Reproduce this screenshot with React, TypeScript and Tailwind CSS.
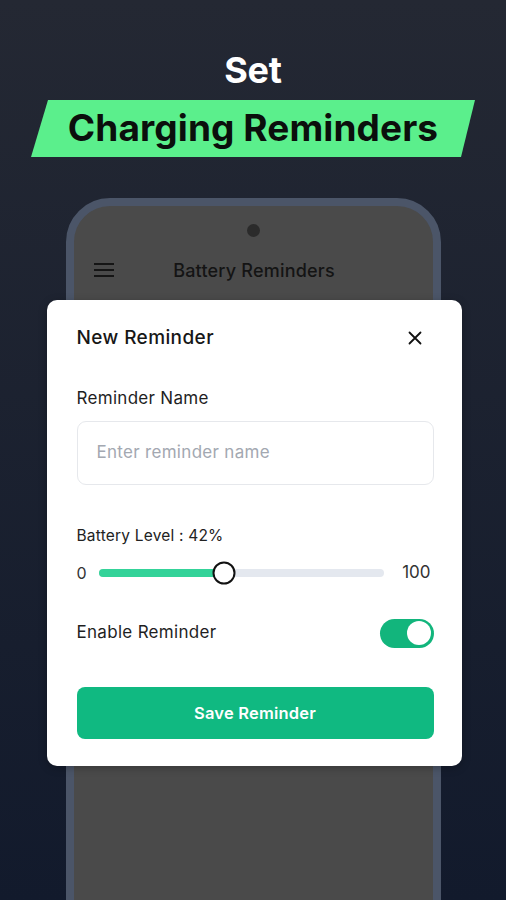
import React from 'react';

const App: React.FC = () => {
  return (
    <div className="relative w-full h-[900px] overflow-hidden bg-gradient-to-b from-[#242833] to-[#121a2c] font-['Inter',sans-serif] flex flex-col items-center">
      <h1 className="shrink-0 mt-[48px] text-[36px] leading-[44px] font-bold text-white tracking-[-0.2px]">Set</h1>

      <div className="shrink-0 mt-[8px] w-[444px] h-[57px] bg-[#5bef8c] [clip-path:polygon(17px_0,100%_0,430px_100%,0_100%)] flex items-center justify-center">
        <span className="text-[37px] leading-none font-bold text-[#0b0f0c] tracking-[0.1px] pb-[2px]">Charging Reminders</span>
      </div>

      {/* phone */}
      <div className="relative shrink-0 mt-[41px] w-[375px] h-[760px] rounded-[44px] border-[8px] border-[#4b5568] bg-[#4a4a4a]">
        <div className="flex justify-center pt-[18px]">
          <div className="w-[13px] h-[13px] rounded-full bg-[#2b2b2b]" />
        </div>
        <div className="relative mt-[19px] h-[28px] flex items-center justify-center">
          <div className="absolute left-[20px] top-[7px] flex flex-col gap-[4px]">
            <div className="w-[20px] h-[2px] bg-[#151515]" />
            <div className="w-[20px] h-[2px] bg-[#151515]" />
            <div className="w-[20px] h-[2px] bg-[#151515]" />
          </div>
          <span className="text-[18px] font-medium tracking-[0.2px] text-[#141414] ml-[2px]">Battery Reminders</span>
        </div>

        {/* dialog */}
        <div className="absolute left-[-27px] top-[94px] w-[415px] bg-white rounded-[10px] pl-[30px] pr-[28px] pt-[26px] pb-[27px] shadow-[0_2px_8px_rgba(0,0,0,0.25)]">
          <div className="h-[24px] flex items-center justify-between">
            <span className="text-[19px] font-medium tracking-[0.4px] text-[#171717]">New Reminder</span>
            <svg width="14" height="14" viewBox="0 0 14 14" className="mr-[12px]">
              <path d="M1.5 1.5 L12.5 12.5 M12.5 1.5 L1.5 12.5" stroke="#111" strokeWidth="1.8" strokeLinecap="round" />
            </svg>
          </div>

          <div className="mt-[37px] h-[24px] flex items-center text-[17px] tracking-[0.3px] text-[#1f1f1f]">Reminder Name</div>
          <div className="mt-[10px] h-[64px] rounded-[9px] border border-[#e6e8ec] flex items-center px-[19px]">
            <span className="text-[17px] tracking-[0.3px] text-[#a3a8b1]">Enter reminder name</span>
          </div>

          <div className="mt-[40px] h-[22px] flex items-center text-[15.5px] tracking-[0.2px] text-[#222]">Battery Level : 42%</div>
          <div className="mt-[14px] h-[24px] flex items-center">
            <span className="text-[16px] text-[#333] w-[8px]">0</span>
            <div className="relative ml-[14px] flex-1 h-[8px] rounded-full bg-[#e4e8ef]">
              <div className="absolute left-0 top-0 h-full w-[44%] rounded-full bg-[#34d399]" />
              <div className="absolute left-[44%] top-1/2 -translate-x-1/2 -translate-y-1/2 w-[23px] h-[23px] rounded-full bg-white border-[2px] border-[#111]" />
            </div>
            <span className="ml-[18px] mr-[3px] text-[17px] text-[#333]">100</span>
          </div>

          <div className="mt-[33px] h-[30px] flex items-center justify-between">
            <span className="text-[17px] tracking-[0.3px] text-[#1f1f1f]">Enable Reminder</span>
            <div className="w-[54px] h-[29px] rounded-full bg-[#12b57c] flex items-center justify-end pr-[3px]">
              <div className="w-[24px] h-[24px] rounded-full bg-white" />
            </div>
          </div>

          <div className="mt-[39px] h-[52px] rounded-[8px] bg-[#10b981] flex items-center justify-center">
            <span className="text-[16.5px] font-semibold tracking-[0.2px] text-white">Save Reminder</span>
          </div>
        </div>
      </div>
    </div>
  );
};

export default App;
